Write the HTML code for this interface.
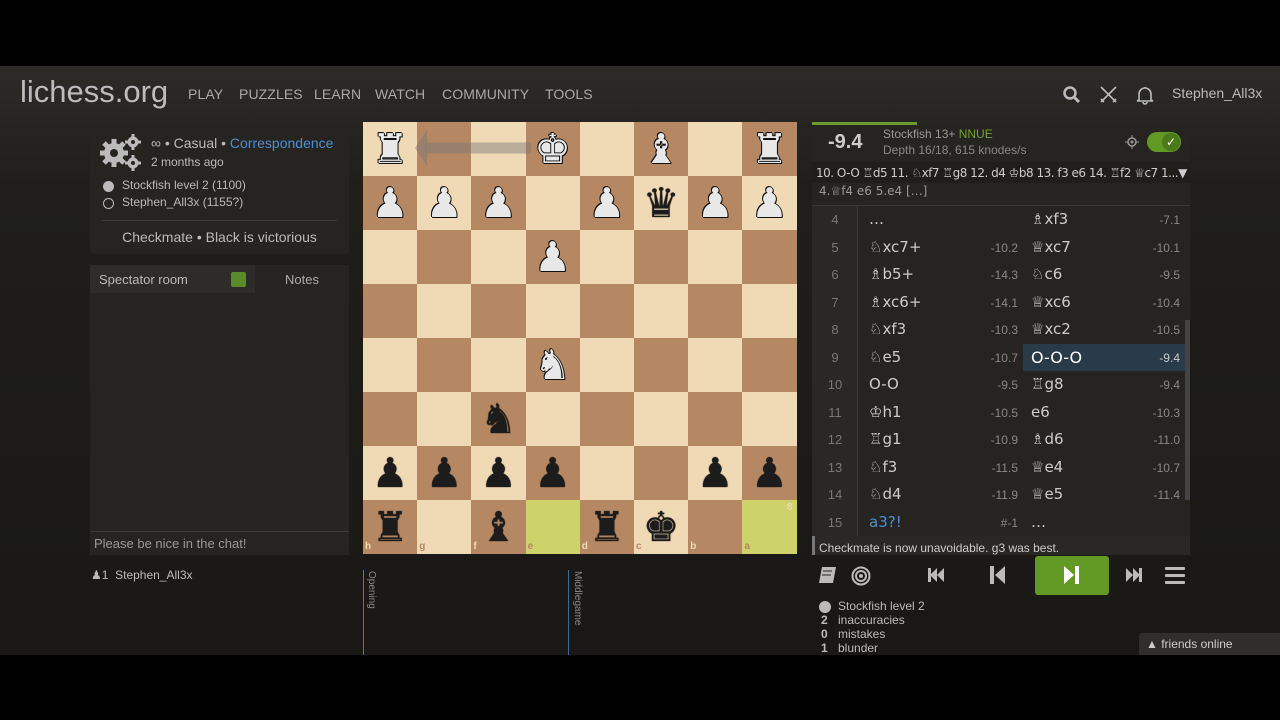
<!DOCTYPE html>
<html><head><meta charset="utf-8"><style>
*{margin:0;padding:0;box-sizing:border-box}
body{width:1280px;height:720px;background:#000;font-family:"Liberation Sans","DejaVu Sans",sans-serif;color:#bababa;position:relative;overflow:hidden}
.abs{position:absolute}
#page{position:absolute;left:0;top:66px;width:1280px;height:589px;background:linear-gradient(#2c2b27,#1f1e1b 120px,#191816)}
.nav{position:absolute;top:86px;font-size:14px;color:#a8a8a8;letter-spacing:.1px}
.board{position:absolute;left:363px;top:122px;width:433px;height:432px}
.sq{position:absolute;width:54.2px;height:54px;text-align:center;font-family:"DejaVu Sans",sans-serif;font-size:41px;line-height:54px}
.w{color:#e8e8e8;text-shadow:-1px 0 #111,1px 0 #111,0 -1px #111,0 1px #111,1px 1px #111,-1px -1px #111}
.b{color:#1c1c1c;text-shadow:0 0 1px #000}
.coord{position:absolute;font-size:10px;font-weight:bold}
.mv{position:absolute;font-size:14px;color:#ccc}
.ev{position:absolute;font-size:12px;color:#888;text-align:right;width:50px}
.num{position:absolute;left:812px;width:46px;text-align:center;font-size:13px;color:#777}
</style></head><body>
<div id="page"></div>
<div class="abs" style="left:20px;top:74px;font-size:31px;color:#bcbcbc">lichess.org</div>
<div class="nav" style="left:188px">PLAY</div>
<div class="nav" style="left:239px">PUZZLES</div>
<div class="nav" style="left:314px">LEARN</div>
<div class="nav" style="left:375px">WATCH</div>
<div class="nav" style="left:442px">COMMUNITY</div>
<div class="nav" style="left:545px">TOOLS</div>
<svg class="abs" style="left:1062px;top:85px" width="20" height="20"><circle cx="8" cy="8" r="5.5" fill="none" stroke="#bbb" stroke-width="2.5"/><line x1="12" y1="12" x2="17" y2="17" stroke="#bbb" stroke-width="3"/></svg>
<svg class="abs" style="left:1099px;top:85px" width="20" height="20"><path d="M2 2L17 17M17 2L2 17M2 14l3 3M17 14l-3 3" stroke="#bbb" stroke-width="1.6"/></svg>
<svg class="abs" style="left:1135px;top:85px" width="20" height="20"><path d="M4 15V9a6 6 0 0112 0v6l2 1H2zM8 17a2 2 0 004 0M10 2v1" fill="none" stroke="#bbb" stroke-width="1.6"/></svg>
<div class="abs" style="left:1172px;top:85px;font-size:14px;color:#bbb">Stephen_All3x</div>

<!-- left info -->
<div class="abs" style="left:90px;top:124px;width:259px;height:130px;background:#262421;border-radius:3px"></div>
<svg class="abs" style="left:99px;top:132px" width="45" height="40">
<g fill="#bbb"><circle cx="15" cy="21" r="10"/><g stroke="#bbb" stroke-width="5"><line x1="15" y1="7" x2="15" y2="35"/><line x1="1" y1="21" x2="29" y2="21"/><line x1="5" y1="11" x2="25" y2="31"/><line x1="25" y1="11" x2="5" y2="31"/></g><circle cx="15" cy="21" r="4" fill="#262421"/>
<circle cx="34" cy="10" r="5.5"/><g stroke="#bbb" stroke-width="3"><line x1="34" y1="2" x2="34" y2="18"/><line x1="26" y1="10" x2="42" y2="10"/></g><circle cx="34" cy="10" r="2" fill="#262421"/>
<circle cx="34" cy="31" r="5.5"/><g stroke="#bbb" stroke-width="3"><line x1="34" y1="23" x2="34" y2="39"/><line x1="26" y1="31" x2="42" y2="31"/></g><circle cx="34" cy="31" r="2" fill="#262421"/></g></svg>
<div class="abs" style="left:151px;top:135px;font-size:14px">∞ • Casual • <span style="color:#4f8ed0">Correspondence</span></div>
<div class="abs" style="left:151px;top:155px;font-size:12px">2 months ago</div>
<div class="abs" style="left:103px;top:181px;width:11px;height:11px;border-radius:50%;background:#bbb"></div>
<div class="abs" style="left:122px;top:178px;font-size:12px">Stockfish level 2 (1100)</div>
<div class="abs" style="left:103px;top:198px;width:11px;height:11px;border-radius:50%;border:1.5px solid #bbb"></div>
<div class="abs" style="left:122px;top:195px;font-size:12px">Stephen_All3x (1155?)</div>
<div class="abs" style="left:102px;top:220px;width:235px;height:1px;background:#3c3a36"></div>
<div class="abs" style="left:90px;top:229px;width:259px;text-align:center;font-size:14px">Checkmate • Black is victorious</div>

<div class="abs" style="left:90px;top:265px;width:259px;height:290px;background:#262421"></div>
<div class="abs" style="left:90px;top:265px;width:165px;height:28px;background:#2e2c29"></div>
<div class="abs" style="left:99px;top:272px;font-size:13px">Spectator room</div>
<div class="abs" style="left:231px;top:272px;width:15px;height:15px;background:#5b8a2a;border-radius:2px"></div>
<div class="abs" style="left:285px;top:272px;font-size:13px;color:#aaa">Notes</div>
<div class="abs" style="left:90px;top:531px;width:259px;height:1px;background:#3c3a36"></div>
<div class="abs" style="left:94px;top:536px;font-size:13px;color:#999">Please be nice in the chat!</div>
<div class="abs" style="left:91px;top:568px;font-size:12px;color:#bbb">&#9823;1&nbsp; Stephen_All3x</div>

<!-- board -->
<div class="board" id="bd"></div>
<script>
var bd=document.getElementById('bd');
var pos=[
"RW,,,KW,,BW,,RW",
"PW,PW,PW,,PW,qB,PW,PW",
",,,PW,,,,",
",,,,,,,",
",,,NW,,,,",
",,nB,,,,,",
"pB,pB,pB,pB,,,pB,pB",
"rB,,bB,,rB,kB,,"];
var g={r:'♜',n:'♞',b:'♝',q:'♛',k:'♚',p:'♟'};
var h='';
for(var r=0;r<8;r++){var row=pos[r].split(',');for(var c=0;c<8;c++){
var light=(r+c)%2==0;var col=light?'#f0d9b5':'#b58863';
if(r==7&&(c==3||c==7))col='#cdd26a';
var p=row[c]||'';var t='',cl='';
if(p){t=g[p[0].toLowerCase()];cl=p[1]=='W'?'w':'b';}
h+='<div class="sq '+cl+'" style="left:'+(c*54.2)+'px;top:'+(r*54)+'px;background:'+col+'">'+t+'</div>';}}
var files='hgfedcba';
for(var c=0;c<8;c++)h+='<div class="coord" style="left:'+(c*54.2+2)+'px;top:419px;color:'+((c%2==0)?'#f0d9b5':'#b58863')+'">'+files[c]+'</div>';
for(var r=0;r<8;r++)h+='<div class="coord" style="left:424px;top:'+(r*54+2)+'px;color:'+((r%2==0)?'#b58863':'#f0d9b5')+'">'+(r+1)+'</div>';
h+='<svg style="position:absolute;left:0;top:0" width="433" height="432"><line x1="62" y1="26" x2="168" y2="26" stroke="rgba(120,120,120,.45)" stroke-width="11"/><polygon points="52,26 64,8 64,44" fill="rgba(120,120,120,.45)"/></svg>';
bd.innerHTML=h;
</script>

<!-- right panel -->
<div class="abs" style="left:812px;top:122px;width:378px;height:433px;background:#262421"></div>
<div class="abs" style="left:812px;top:122px;width:105px;height:3px;background:#6c9a30"></div>
<div class="abs" style="left:828px;top:131px;font-size:20px;font-weight:bold;color:#ccc">-9.4</div>
<div class="abs" style="left:883px;top:127px;font-size:12px;color:#999">Stockfish 13+ <span style="color:#6ea33a">NNUE</span></div>
<div class="abs" style="left:883px;top:143px;font-size:12px;color:#888">Depth 16/18, 615 knodes/s</div>
<svg class="abs" style="left:1125px;top:135px" width="14" height="14"><circle cx="7" cy="7" r="4" fill="none" stroke="#999" stroke-width="1.5"/><circle cx="7" cy="7" r="1.5" fill="#999"/><path d="M7 0v3M7 11v3M0 7h3M11 7h3" stroke="#999"/></svg>
<div class="abs" style="left:1147px;top:132px;width:34px;height:20px;border-radius:10px;background:#629924"></div>
<div class="abs" style="left:1162px;top:133px;width:18px;height:18px;border-radius:50%;background:#4a7a1a;color:#fff;font-size:12px;text-align:center;line-height:18px">✓</div>
<div class="abs" style="left:812px;top:162px;width:378px;height:21px;background:#1f1e1b"></div>
<div class="abs" style="left:816px;top:166px;font-size:12px;color:#ccc;white-space:nowrap;font-family:'DejaVu Sans',sans-serif;letter-spacing:-.5px">10. O-O ♖d5 11. ♘xf7 ♖g8 12. d4 ♔b8 13. f3 e6 14. ♖f2 ♕c7 1...▼</div>
<div class="abs" style="left:819px;top:184px;font-size:12px;color:#999;font-family:'DejaVu Sans',sans-serif">4.♕f4 e6 5.e4 […]</div>
<div class="abs" style="left:812px;top:205px;width:378px;height:1px;background:#3a3835"></div>
<div class="abs" style="left:812px;top:206px;width:46px;height:330px;background:#2a2825;border-right:1px solid #3a3835"></div>
<div class="abs" style="left:1023px;top:344px;width:162px;height:27px;background:#293a49"></div>
<div class="abs" style="left:1185px;top:320px;width:5px;height:180px;background:#444"></div>
<div id="ml"></div>
<script>
var rows=[[4,'…','','♗xf3','-7.1'],[5,'♘xc7+','-10.2','♕xc7','-10.1'],[6,'♗b5+','-14.3','♘c6','-9.5'],[7,'♗xc6+','-14.1','♕xc6','-10.4'],[8,'♘xf3','-10.3','♕xc2','-10.5'],[9,'♘e5','-10.7','O-O-O','-9.4'],[10,'O-O','-9.5','♖g8','-9.4'],[11,'♔h1','-10.5','e6','-10.3'],[12,'♖g1','-10.9','♗d6','-11.0'],[13,'♘f3','-11.5','♕e4','-10.7'],[14,'♘d4','-11.9','♕e5','-11.4'],[15,'a3?!','#-1','…','']];
var s='';
rows.forEach(function(r,i){var y=210+i*27.5;
s+='<div class="num" style="top:'+(y+2)+'px">'+r[0]+'</div>';
s+='<div class="mv" style="left:869px;top:'+y+'px;font-size:15px;font-family:\'DejaVu Sans\',sans-serif;'+(r[0]==15?'color:#4f8ed0':'')+'">'+r[1]+'</div>';
s+='<div class="ev" style="left:968px;top:'+(y+3)+'px">'+r[2]+'</div>';
s+='<div class="mv" style="left:1031px;top:'+y+'px;font-size:15px;font-family:\'DejaVu Sans\',sans-serif;'+(r[0]==9?'color:#fff;font-size:16px':'')+'">'+r[3]+'</div>';
s+='<div class="ev" style="left:1130px;top:'+(y+3)+'px;'+(r[0]==9?'color:#ccc':'')+'">'+r[4]+'</div>';});
document.getElementById('ml').innerHTML=s;
</script>
<div class="abs" style="left:812px;top:536px;width:378px;height:19px;background:#2a2825;border-left:3px solid #777"></div>
<div class="abs" style="left:819px;top:541px;font-size:12px;color:#ccc">Checkmate is now unavoidable. g3 was best.</div>

<!-- controls -->
<svg class="abs" style="left:818px;top:566px" width="20" height="18"><path d="M4 1h14l-3 16H1z" fill="#bbb"/><path d="M5 5h9M4 9h9" stroke="#262421"/></svg>
<svg class="abs" style="left:851px;top:566px" width="20" height="20"><circle cx="10" cy="10" r="8.5" fill="none" stroke="#bbb" stroke-width="2"/><circle cx="10" cy="10" r="5" fill="none" stroke="#bbb" stroke-width="2"/><circle cx="10" cy="10" r="2" fill="#bbb"/></svg>
<svg class="abs" style="left:928px;top:568px" width="16" height="14"><rect x="0" y="0" width="3" height="14" fill="#bbb"/><path d="M9 0v14L2 7zM16 0v14L9 7z" fill="#bbb"/></svg>
<svg class="abs" style="left:990px;top:566px" width="16" height="18"><rect x="0" y="0" width="4" height="18" fill="#bbb"/><path d="M15 0v18L5 9z" fill="#bbb"/></svg>
<div class="abs" style="left:1035px;top:556px;width:74px;height:39px;background:#629924;border-radius:3px"></div>
<svg class="abs" style="left:1064px;top:566px" width="16" height="18"><path d="M0 0v18l10-9z" fill="#fff"/><rect x="11" y="0" width="4" height="18" fill="#fff"/></svg>
<svg class="abs" style="left:1126px;top:568px" width="16" height="14"><path d="M0 0v14l7-7zM7 0v14l7-7z" fill="#bbb"/><rect x="13" y="0" width="3" height="14" fill="#bbb"/></svg>
<svg class="abs" style="left:1165px;top:566px" width="20" height="18"><rect y="1" width="20" height="3" rx="1" fill="#bbb"/><rect y="8" width="20" height="3" rx="1" fill="#bbb"/><rect y="15" width="20" height="3" rx="1" fill="#bbb"/></svg>

<div class="abs" style="left:819px;top:601px;width:12px;height:12px;border-radius:50%;background:#bbb"></div>
<div class="abs" style="left:838px;top:599px;font-size:12px;line-height:14px;color:#bbb">Stockfish level 2<br>inaccuracies<br>mistakes<br>blunder</div>
<div class="abs" style="left:821px;top:613px;font-size:12px;line-height:14px;font-weight:bold;color:#bbb">2<br>0<br>1</div>

<!-- timeline -->
<div class="abs" style="left:363px;top:570px;width:1px;height:85px;background:#5b8a2a"></div>
<div class="abs" style="left:568px;top:570px;width:1px;height:85px;background:#3a6a9a"></div>
<div class="abs" style="left:366px;top:571px;font-size:10px;color:#888;writing-mode:vertical-rl">Opening</div>
<div class="abs" style="left:572px;top:571px;font-size:10px;color:#888;writing-mode:vertical-rl">Middlegame</div>

<div class="abs" style="left:1139px;top:633px;width:141px;height:22px;background:#302e2b;border-radius:3px 0 0 0"></div>
<div class="abs" style="left:1146px;top:637px;font-size:12px;color:#ccc">▲ friends online</div>
</body></html>
